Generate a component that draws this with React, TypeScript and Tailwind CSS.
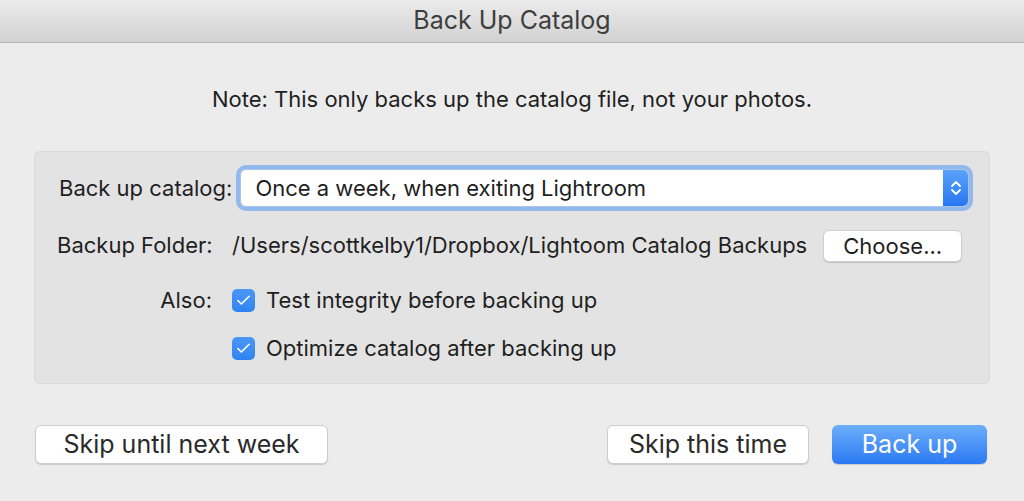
import { Check } from 'lucide-react';

const Checkbox = ({ label }: { label: string }) => (
  <div className="flex items-center gap-[11px]">
    <span className="flex h-[23px] w-[23px] items-center justify-center rounded-[5px] bg-gradient-to-b from-[#4b97f7] to-[#2f83f2]">
      <Check className="h-[17px] w-[17px] text-white" strokeWidth={2.3} />
    </span>
    <span>{label}</span>
  </div>
);

const Stepper = () => (
  <svg width="12" height="18" viewBox="0 0 12 18" fill="none">
    <path d="M2 7 L6 3 L10 7" stroke="white" strokeWidth="1.8" strokeLinecap="round" strokeLinejoin="round" />
    <path d="M2 11 L6 15 L10 11" stroke="white" strokeWidth="1.8" strokeLinecap="round" strokeLinejoin="round" />
  </svg>
);

export default function App() {
  return (
    <div className="flex h-[501px] w-[1024px] flex-col bg-[#ececec] font-['Inter',sans-serif] text-[#1f1f1f]">
      <header className="flex h-[43px] items-center justify-center border-b border-[#b4b4b4] bg-gradient-to-b from-[#ebebeb] to-[#d2d2d2] text-[25px] text-[#3e3e3e]">
        Back Up Catalog
      </header>

      <p className="mt-[42px] text-center text-[22px] leading-[28px]">
        Note: This only backs up the catalog file, not your photos.
      </p>

      <section className="mx-[34px] mt-[38px] flex h-[233px] flex-col rounded-[6px] border border-[#dadada] bg-[#e3e3e3] pl-[22px] pr-[16px] pt-[13px] text-[22px] leading-[33px] whitespace-nowrap">
        <div className="flex h-[46px] items-center">
          <span className="ml-[2px]">Back up catalog:</span>
          <div className="ml-[4px] flex h-[46px] flex-1 rounded-[10px] bg-[#92b8ec] p-[4px]">
            <div className="flex flex-1 overflow-hidden rounded-[6px] border border-[#a9c4ea] bg-white">
              <span className="flex flex-1 items-center pl-[14px]">
                Once a week, when exiting Lightroom
              </span>
              <span className="flex w-[25px] items-center justify-center bg-gradient-to-b from-[#5aa2f9] to-[#2676f1]">
                <Stepper />
              </span>
            </div>
          </div>
        </div>

        <div className="mt-[18px] grid grid-cols-[155px_auto] items-center gap-x-[20px]">
          <span className="text-right">Backup Folder:</span>
          <div className="flex items-center">
            <span>/Users/scottkelby1/Dropbox/Lightoom Catalog Backups</span>
            <button className="ml-[16px] h-[32px] w-[139px] rounded-[6px] border border-[#cfcfcf] bg-white leading-[30px] shadow-[0_1px_1px_rgba(0,0,0,0.15)]">
              Choose...
            </button>
          </div>

          <span className="mt-[22px] text-right">Also:</span>
          <div className="mt-[22px]">
            <Checkbox label="Test integrity before backing up" />
          </div>

          <span />
          <div className="mt-[15px]">
            <Checkbox label="Optimize catalog after backing up" />
          </div>
        </div>
      </section>

      <footer className="mt-[41px] flex items-center pl-[35px] pr-[37px] text-[25px]">
        <button className="h-[39px] w-[293px] rounded-[6px] border border-[#cdcdcd] bg-white text-[#2a2a2a] shadow-[0_1px_1px_rgba(0,0,0,0.15)]">
          Skip until next week
        </button>
        <div className="flex-1" />
        <button className="h-[39px] w-[202px] rounded-[6px] border border-[#cdcdcd] bg-white text-[#2a2a2a] shadow-[0_1px_1px_rgba(0,0,0,0.15)]">
          Skip this time
        </button>
        <button className="ml-[23px] h-[39px] w-[155px] rounded-[6px] bg-gradient-to-b from-[#6cadfa] to-[#2a79f3] text-white shadow-[0_1px_1px_rgba(0,0,0,0.15)]">
          Back up
        </button>
      </footer>
    </div>
  );
}
